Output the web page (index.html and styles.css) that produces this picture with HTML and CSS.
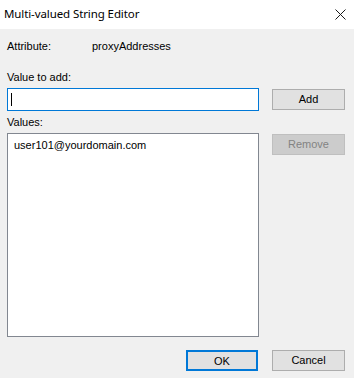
FILE: index.html
```html
<!DOCTYPE html>
<html>
<head>
<meta charset="utf-8">
<link rel="stylesheet" href="styles.css">
</head>
<body>
<div class="window">
  <div class="titlebar">
    <span class="title">Multi-valued String Editor</span>
    <svg class="close" width="11" height="11" viewBox="0 0 11 11"><path d="M0.5 0.5 L10.5 10.5 M10.5 0.5 L0.5 10.5" stroke="#1a1a1a" stroke-width="1" fill="none"/></svg>
  </div>
  <div class="content">
    <div class="attr-row">
      <span class="attr-label">Attribute:</span>
      <span class="attr-value">proxyAddresses</span>
    </div>
    <div class="label add-label">Value to add:</div>
    <div class="row input-row">
      <div class="textbox"><span class="caret"></span></div>
      <button class="btn add-btn">Add</button>
    </div>
    <div class="label values-label">Values:</div>
    <div class="row list-row">
      <div class="listbox">
        <div class="item">user101@yourdomain.com</div>
      </div>
      <button class="btn remove-btn" disabled>Remove</button>
    </div>
    <div class="footer">
      <button class="btn ok-btn">OK</button>
      <button class="btn cancel-btn">Cancel</button>
    </div>
  </div>
</div>
</body>
</html>
```
FILE: styles.css
```css
* { box-sizing: border-box; }
html, body { margin: 0; padding: 0; }
body {
  width: 354px;
  height: 378px;
  background: #f0f0f0;
  font-family: "Liberation Sans", Arial, sans-serif;
  font-size: 11px;
  color: #000;
  overflow: hidden;
}
.window { display: flex; flex-direction: column; height: 378px; }
.titlebar {
  height: 29px;
  background: #ffffff;
  display: flex;
  align-items: center;
  justify-content: space-between;
  padding: 0 8px 0 4px;
}
.title {
  font-family: "Noto Sans", "Open Sans", sans-serif;
  font-size: 11.5px;
  letter-spacing: -0.1px;
  color: #000;
  position: relative;
  top: -1px;
}
.close { display: block; margin-top: -1px; }
.content {
  padding: 0 9px 0 7px;
  display: flex;
  flex-direction: column;
}
.attr-row {
  margin-top: 11px;
  height: 13px;
  line-height: 13px;
  display: flex;
}
.attr-label { width: 85px; }
.label { height: 13px; line-height: 13px; }
.add-label { margin-top: 18px; }
.values-label { margin-top: 5px; }
.row { display: flex; align-items: flex-start; justify-content: space-between; }
.input-row { margin-top: 4px; }
.textbox {
  width: 252px;
  height: 23px;
  background: #fff;
  border: 1px solid #0078d7;
  position: relative;
}
.caret {
  position: absolute;
  left: 3px;
  top: 4px;
  width: 1px;
  height: 13px;
  background: #000;
}
.btn {
  width: 73px;
  height: 21px;
  padding: 0;
  background: #e1e1e1;
  border: 1px solid #adadad;
  font-family: "Liberation Sans", Arial, sans-serif;
  font-size: 11px;
  color: #000;
  line-height: 19px;
  text-align: center;
}
.add-btn { margin-top: 1px; }
.list-row { margin-top: 4px; }
.listbox {
  width: 252px;
  height: 204px;
  background: #fff;
  border: 1px solid #828790;
  padding: 5px 0 0 6px;
}
.item { line-height: 13px; }
.remove-btn {
  margin-top: 1px;
  background: #cccccc;
  border-color: #bfbfbf;
  color: #838383;
}
.footer {
  margin-top: 13px;
  display: flex;
  justify-content: flex-end;
  gap: 14px;
}
.ok-btn { border: 2px solid #0078d7; width: 72px; }
```
